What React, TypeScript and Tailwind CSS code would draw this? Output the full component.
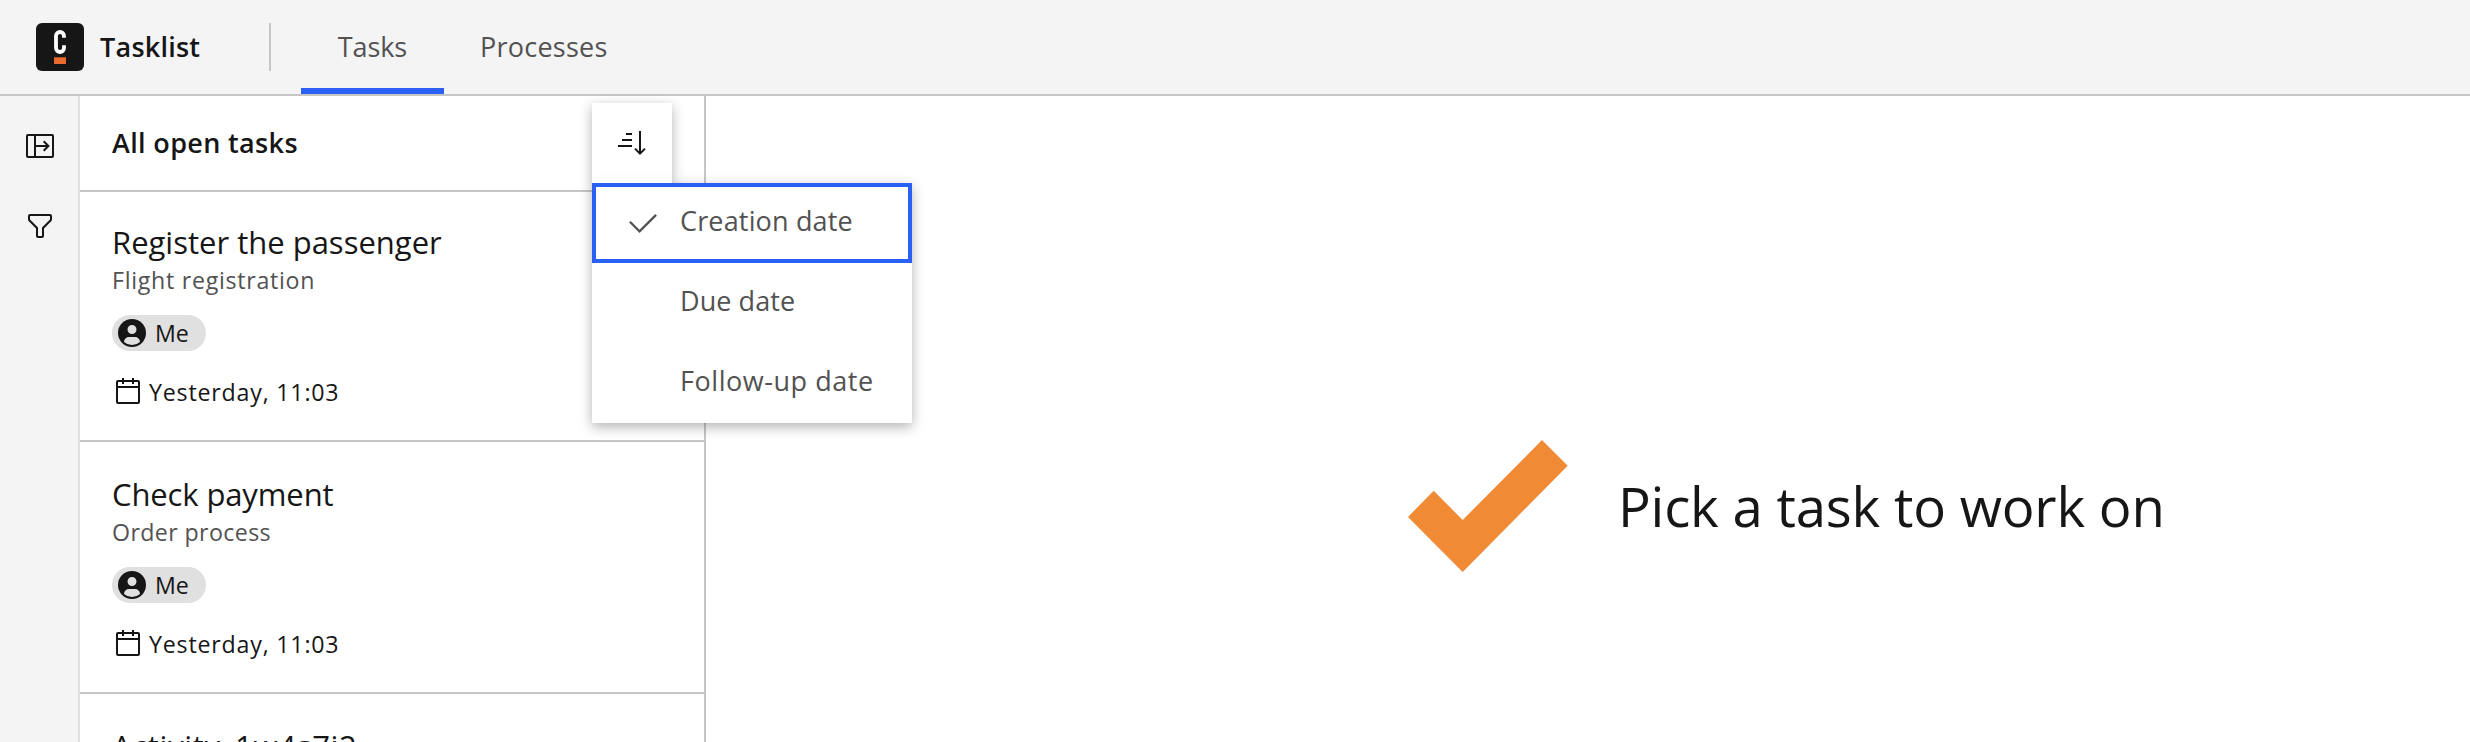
import type { ReactNode } from 'react';

type Task = {
  name: string;
  nameTracking: string;
  process: string;
  processTracking: string;
};

const tasks: Task[] = [
  {
    name: 'Register the passenger',
    nameTracking: 'tracking-normal',
    process: 'Flight registration',
    processTracking: 'tracking-[0.71px]',
  },
  {
    name: 'Check payment',
    nameTracking: 'tracking-[-0.12px]',
    process: 'Order process',
    processTracking: 'tracking-[0.38px]',
  },
  {
    name: 'Activity_1w4s7i2',
    nameTracking: 'tracking-[0.7px]',
    process: 'Order process',
    processTracking: 'tracking-[0.38px]',
  },
];

function Icon({ children }: { children: ReactNode }) {
  return (
    <svg viewBox="0 0 32 32" className="size-8 shrink-0" fill="currentColor">
      {children}
    </svg>
  );
}

function Logo() {
  return (
    <svg viewBox="0 0 48 48" className="size-12 shrink-0">
      <rect width="48" height="48" rx="6" fill="#161616" />
      <path
        d="M28 14.8V13a4 4 0 0 0-8 0v12a4 4 0 0 0 8 0v-2.8"
        fill="none"
        stroke="#fff"
        strokeWidth="3.8"
      />
      <rect x="18" y="34.3" width="12" height="6.7" fill="#eb6a2e" />
    </svg>
  );
}

function PanelOpenIcon() {
  return (
    <Icon>
      <path d="M28 4H4a2 2 0 0 0-2 2v20a2 2 0 0 0 2 2h24a2 2 0 0 0 2-2V6a2 2 0 0 0-2-2ZM10 26H4V6h6Zm18 0H12V6h16Z" />
      <path d="M12 16h12.4M19.7 11.3l4.7 4.7-4.7 4.7" fill="none" stroke="currentColor" strokeWidth="2" />
    </Icon>
  );
}

function FilterIcon() {
  return (
    <Icon>
      <path d="M18,28H14a2,2,0,0,1-2-2V18.41L4.59,11A2,2,0,0,1,4,9.59V6A2,2,0,0,1,6,4H26a2,2,0,0,1,2,2V9.59A2,2,0,0,1,27.41,11L20,18.41V26A2,2,0,0,1,18,28ZM6,6V9.59l8,8V26h4V17.59l8-8V6Z" />
    </Icon>
  );
}

function SortIcon() {
  return (
    <Icon>
      <path d="M10 6h6v2h-6zM6 12h10v2H6zM2 18h14v2H2z" />
      <path d="M24 4v22.4M19 21.6l5 5 5-5" fill="none" stroke="currentColor" strokeWidth="2" />
    </Icon>
  );
}

function CalendarIcon() {
  return (
    <Icon>
      <path d="M26,4H22V2H20V4H12V2H10V4H6A2,2,0,0,0,4,6V26a2,2,0,0,0,2,2H26a2,2,0,0,0,2-2V6A2,2,0,0,0,26,4Zm0,22H6V12H26Zm0-16H6V6h4V8h2V6h8V8h2V6h4Z" />
    </Icon>
  );
}

function AvatarIcon() {
  return (
    <Icon>
      <circle cx="16" cy="16" r="14" />
      <path
        fill="#e0e0e0"
        d="M8.0071,24.93A4.9958,4.9958,0,0,1,13,20h6a4.9959,4.9959,0,0,1,4.9929,4.93,11.94,11.94,0,0,1-15.9858,0ZM20.5,12.5A4.5,4.5,0,1,1,16,8,4.5,4.5,0,0,1,20.5,12.5Z"
      />
    </Icon>
  );
}

function TaskItem({ task, first }: { task: Task; first: boolean }) {
  return (
    <li
      className={`flex flex-col items-start border-b-2 border-[#c6c6c6] px-8 pb-8 ${first ? 'pt-8' : 'pt-[34px]'}`}
    >
      <h2 className={`text-[31px] leading-9 ${task.nameTracking}`}>{task.name}</h2>
      <p className={`mt-1 text-[23.2px] leading-8 text-[#525252] ${task.processTracking}`}>
        {task.process}
      </p>
      <div className="mt-[19px] flex h-9 w-[94px] items-center rounded-full bg-[#e0e0e0] pl-1">
        <AvatarIcon />
        <span className="ml-[7px] text-[23.2px] leading-9">Me</span>
      </div>
      <div className="mt-[25px] flex h-8 items-center">
        <CalendarIcon />
        <span className="ml-[5px] text-[23.2px] leading-8 tracking-[0.8px]">Yesterday, 11:03</span>
      </div>
    </li>
  );
}

function MenuItem({ label, tracking, selected }: { label: string; tracking: string; selected?: boolean }) {
  return (
    <li
      className={`flex h-20 items-center border-4 pl-[33px] ${selected ? 'border-[#2b60f6]' : 'border-transparent'}`}
    >
      <span className="w-[51px]">
        {selected && (
          <svg viewBox="4 7.586 24 16.414" className="h-[19px] w-7" fill="currentColor">
            <path d="M13 24 4 15l1.414-1.414L13 21.171 26.586 7.586 28 9z" />
          </svg>
        )}
      </span>
      <span className={`pb-[5px] leading-9 whitespace-nowrap ${tracking}`}>{label}</span>
    </li>
  );
}

function SortMenu() {
  return (
    <div className="relative">
      <button className="flex size-20 items-center justify-center bg-white shadow-[0_4px_12px_rgba(0,0,0,0.3)]">
        <SortIcon />
      </button>
      <ul className="absolute top-20 left-0 z-10 w-80 bg-white text-[#525252] shadow-[0_4px_12px_rgba(0,0,0,0.3)]">
        <MenuItem label="Creation date" tracking="tracking-[0.16px]" selected />
        <MenuItem label="Due date" tracking="tracking-[0.06px]" />
        <MenuItem label="Follow-up date" tracking="tracking-[0.55px]" />
      </ul>
      <span className="absolute bottom-0 left-0 z-20 h-1.5 w-20 bg-white" />
    </div>
  );
}

export default function App() {
  return (
    <div className="flex h-[742px] w-[2470px] flex-col overflow-hidden bg-white font-['Open_Sans',sans-serif] text-[27px] text-[#161616]">
      <header className="flex h-24 shrink-0 items-stretch border-b-2 border-[#c6c6c6] bg-[#f4f4f4] pl-9">
        <div className="flex w-[233px] items-center gap-4">
          <Logo />
          <span className="font-semibold tracking-[0.23px]">Tasklist</span>
        </div>
        <span className="h-12 w-0.5 self-center bg-[#c6c6c6]" />
        <nav className="ml-[30px] flex text-[#525252]">
          <a className="flex w-[143px] items-center justify-center border-b-6 border-[#2b60f6] pt-1.5 tracking-[-0.1px]">
            Tasks
          </a>
          <a className="flex items-center px-9 tracking-[0.24px]">Processes</a>
        </nav>
      </header>
      <div className="flex min-h-0 flex-1">
        <aside className="flex w-20 shrink-0 flex-col items-start gap-12 border-r-2 border-[#e0e0e0] bg-[#f4f4f4] pt-[34px] pl-6">
          <PanelOpenIcon />
          <FilterIcon />
        </aside>
        <section className="w-[626px] shrink-0 border-r-2 border-[#c6c6c6]">
          <div className="flex h-24 items-center justify-between border-b-2 border-[#c6c6c6] pr-8 pl-8">
            <h1 className="font-semibold tracking-[0.35px]">All open tasks</h1>
            <SortMenu />
          </div>
          <ul>
            {tasks.map((task, i) => (
              <TaskItem key={task.name} task={task} first={i === 0} />
            ))}
          </ul>
        </section>
        <main className="flex flex-1 items-start pt-[344px] pl-[702px]">
          <svg viewBox="8 10 160 132" className="h-[132px] w-40 shrink-0">
            <path d="M142 10l25.7 25.7L62.7 142 8 87l25.7-26.3L62.7 90z" fill="#f08a35" />
          </svg>
          <p className="ml-[50px] text-[54.5px] leading-[132px] tracking-[-0.2px] whitespace-nowrap">
            Pick a task to work on
          </p>
        </main>
      </div>
    </div>
  );
}
